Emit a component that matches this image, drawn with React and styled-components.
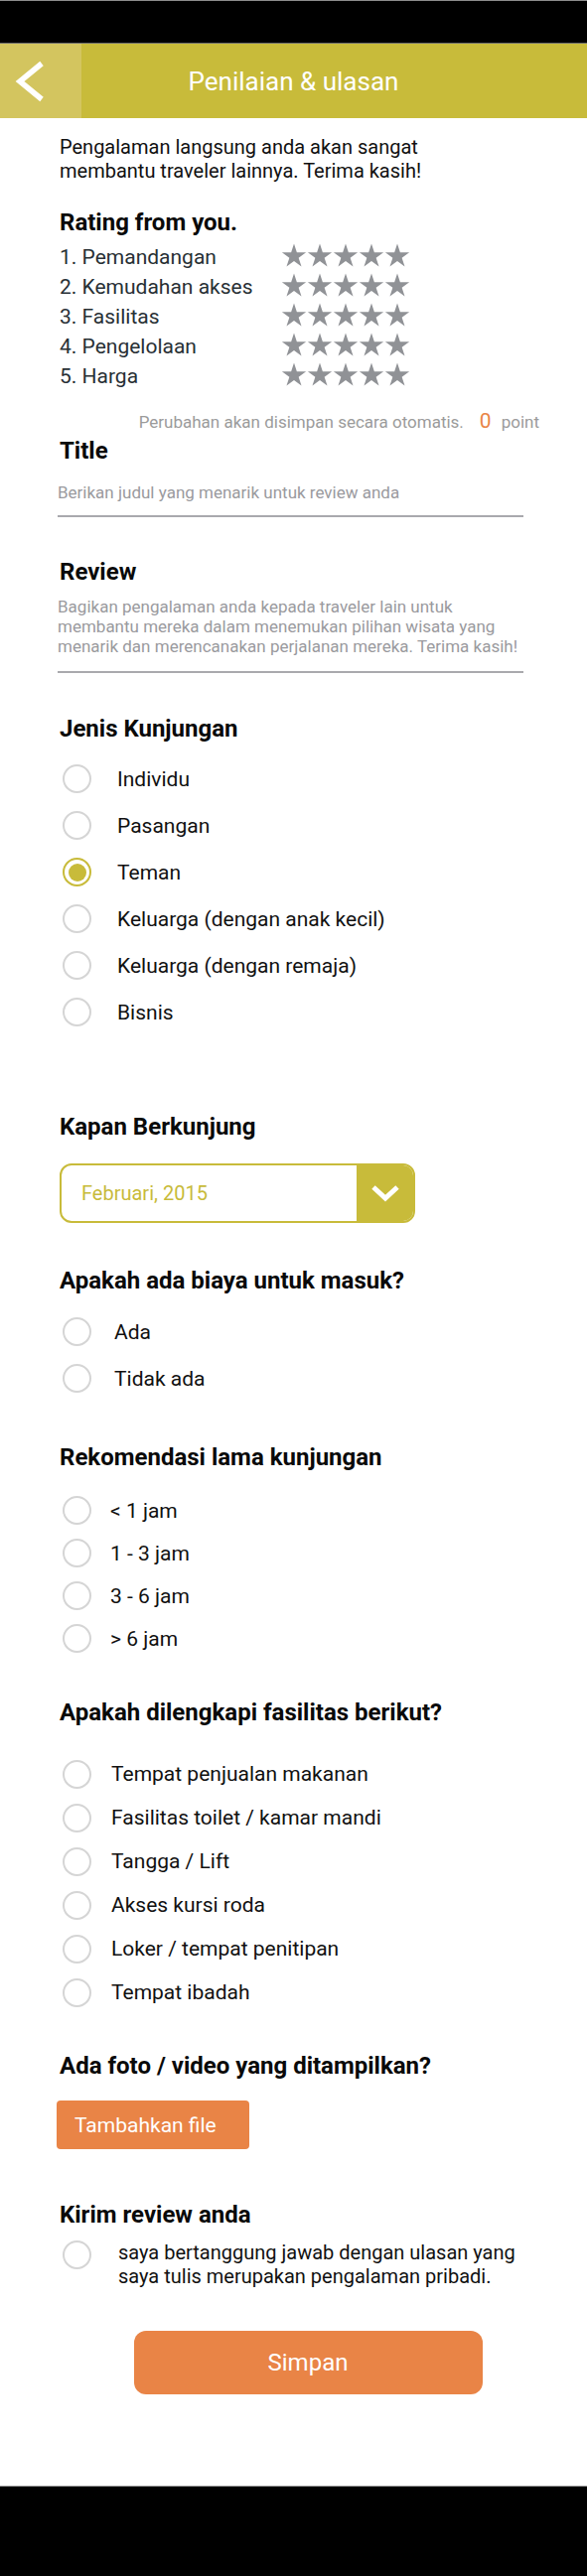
import React from 'react';
import styled, { createGlobalStyle } from 'styled-components';

const ratings = ['1. Pemandangan', '2. Kemudahan akses', '3. Fasilitas', '4. Pengelolaan', '5. Harga'];

const visitTypes = [
  'Individu',
  'Pasangan',
  'Teman',
  'Keluarga (dengan anak kecil)',
  'Keluarga (dengan remaja)',
  'Bisnis',
];

const durations = ['< 1 jam', '1 - 3 jam', '3 - 6 jam', '> 6 jam'];

const facilities = [
  'Tempat penjualan makanan',
  'Fasilitas toilet / kamar mandi',
  'Tangga / Lift',
  'Akses kursi roda',
  'Loker / tempat penitipan',
  'Tempat ibadah',
];

function Star() {
  return (
    <StarIcon viewBox="0 0 24 24">
      <polygon points="12,1.35 14.65,9.49 23.2,9.49 16.28,14.52 18.92,22.66 12,17.63 5.08,22.66 7.72,14.52 0.8,9.49 9.35,9.49" />
    </StarIcon>
  );
}

function RadioList({ items, checked, rowHeight, gap, top }) {
  return (
    <List $top={top}>
      {items.map((item) => (
        <RadioRow key={item} $h={rowHeight}>
          <Radio $checked={item === checked} />
          <RadioLabel $gap={gap}>{item}</RadioLabel>
        </RadioRow>
      ))}
    </List>
  );
}

function App() {
  return (
    <Page>
      <GlobalStyle />
      <StatusBar />
      <Header>
        <BackButton aria-label="Kembali">
          <svg width="30" height="42" viewBox="0 0 30 42">
            <polyline points="27,3 5,21 27,39" fill="none" stroke="#fff" strokeWidth="5.5" />
          </svg>
        </BackButton>
        <HeaderTitle>Penilaian &amp; ulasan</HeaderTitle>
      </Header>

      <Content>
        <Intro>
          Pengalaman langsung anda akan sangat
          <br />
          membantu traveler lainnya. Terima kasih!
        </Intro>

        <Heading $top={26}>Rating from you.</Heading>
        <RatingList>
          {ratings.map((label) => (
            <RatingRow key={label}>
              <RatingLabel>{label}</RatingLabel>
              <Stars>
                {[0, 1, 2, 3, 4].map((i) => (
                  <Star key={i} />
                ))}
              </Stars>
            </RatingRow>
          ))}
        </RatingList>
        <AutoSave>
          Perubahan akan disimpan secara otomatis.
          <Points>0</Points>
          point
        </AutoSave>

        <Heading $top={5}>Title</Heading>
        <Field $top={17} $pad={12}>
          <Placeholder $lh={22}>Berikan judul yang menarik untuk review anda</Placeholder>
        </Field>

        <Heading $top={41}>Review</Heading>
        <Field $top={11} $pad={15}>
          <Placeholder $lh={20}>
            Bagikan pengalaman anda kepada traveler lain untuk
            <br />
            membantu mereka dalam menemukan pilihan wisata yang
            <br />
            menarik dan merencanakan perjalanan mereka. Terima kasih!
          </Placeholder>
        </Field>

        <Heading $top={42}>Jenis Kunjungan</Heading>
        <RadioList items={visitTypes} checked="Teman" rowHeight={47} gap={26} top={13} />

        <Heading $top={78}>Kapan Berkunjung</Heading>
        <Select>
          <SelectValue>Februari, 2015</SelectValue>
          <SelectButton>
            <svg width="30" height="18" viewBox="0 0 30 18">
              <polyline points="3,3 15,14 27,3" fill="none" stroke="#fff" strokeWidth="5" />
            </svg>
          </SelectButton>
        </Select>

        <Heading $top={44}>Apakah ada biaya untuk masuk?</Heading>
        <RadioList items={['Ada', 'Tidak ada']} rowHeight={47} gap={23} top={14} />

        <Heading $top={42}>Rekomendasi lama kunjungan</Heading>
        <RadioList items={durations} rowHeight={43} gap={19} top={18} />

        <Heading $top={39}>Apakah dilengkapi fasilitas berikut?</Heading>
        <RadioList items={facilities} rowHeight={44} gap={20} top={26} />

        <Heading $top={38}>Ada foto / video yang ditampilkan?</Heading>
        <FileButton>Tambahkan file</FileButton>

        <Heading $top={52}>Kirim review anda</Heading>
        <Consent>
          <Radio />
          <ConsentText>
            saya bertanggung jawab dengan ulasan yang
            <br />
            saya tulis merupakan pengalaman pribadi.
          </ConsentText>
        </Consent>

        <SaveButton>Simpan</SaveButton>
      </Content>

      <NavBar />
    </Page>
  );
}

const GlobalStyle = createGlobalStyle`
  body {
    margin: 0;
    background: #fff;
    font-family: Roboto, "Noto Sans", Arial, sans-serif;
    color: #111;
  }
`;

const Page = styled.div`
  width: 591px;
  display: flex;
  flex-direction: column;
`;

const StatusBar = styled.div`
  height: 42px;
  background: #000;
  border-top: 1px solid #8c8c8c;
  border-bottom: 1px solid #6e6e6e;
`;

const NavBar = styled(StatusBar)`
  height: 90px;
`;

const Header = styled.header`
  display: grid;
  grid-template-columns: 82px 1fr 82px;
  height: 75px;
  background: #c8bb3a;
`;

const BackButton = styled.button`
  display: flex;
  align-items: center;
  padding: 0 0 0 15px;
  border: 0;
  background: #d3c55f;
  cursor: pointer;
`;

const HeaderTitle = styled.h1`
  align-self: center;
  margin: 0;
  color: #fff;
  font-size: 26px;
  font-weight: 400;
  text-align: center;
`;

const Content = styled.main`
  display: flex;
  flex-direction: column;
  align-items: flex-start;
  padding: 17px 31px 92px 60px;
`;

const Intro = styled.p`
  margin: 0;
  font-size: 20px;
  line-height: 24px;
  color: #111;
`;

const Heading = styled.h2`
  margin: ${(p) => p.$top}px 0 0;
  font-size: 24px;
  line-height: 28px;
  font-weight: 700;
  color: #0a0a0a;
`;

const RatingList = styled.div`
  margin-top: 6px;
  display: flex;
  flex-direction: column;
`;

const RatingRow = styled.div`
  display: grid;
  grid-template-columns: 223px auto;
  align-items: start;
  height: 30px;
`;

const RatingLabel = styled.span`
  font-size: 21px;
  line-height: 30px;
  color: #283035;
`;

const Stars = styled.div`
  display: flex;
`;

const StarIcon = styled.svg`
  width: 26px;
  height: 26px;
  fill: #909296;
`;

const AutoSave = styled.div`
  align-self: stretch;
  margin-top: 20px;
  padding-right: 17px;
  display: flex;
  justify-content: flex-end;
  align-items: baseline;
  font-size: 17px;
  line-height: 20px;
  color: #9b9b9b;
`;

const Points = styled.span`
  margin: 0 10px 0 16px;
  font-size: 21px;
  color: #e98446;
`;

const Field = styled.div`
  width: 469px;
  margin-top: ${(p) => p.$top}px;
  margin-left: -2px;
  padding-bottom: ${(p) => p.$pad}px;
  border-bottom: 2px solid #a9a9ad;
`;

const Placeholder = styled.div`
  font-size: 17px;
  line-height: ${(p) => p.$lh}px;
  color: #9a9a9e;
`;

const List = styled.div`
  margin-top: ${(p) => p.$top}px;
  display: flex;
  flex-direction: column;
`;

const RadioRow = styled.div`
  display: flex;
  align-items: center;
  height: ${(p) => p.$h}px;
`;

const Radio = styled.span`
  position: relative;
  flex: none;
  box-sizing: border-box;
  width: 29px;
  height: 29px;
  margin-left: 3px;
  border-radius: 50%;
  border: ${(p) => (p.$checked ? '2.5px solid #c8bb3a' : '2px solid #d5d5d5')};

  &::after {
    content: '';
    display: ${(p) => (p.$checked ? 'block' : 'none')};
    position: absolute;
    inset: 3.5px;
    border-radius: 50%;
    background: #c8bb3a;
  }
`;

const RadioLabel = styled.span`
  margin-left: ${(p) => p.$gap}px;
  font-size: 21px;
  line-height: 24px;
  color: #111;
`;

const Select = styled.div`
  box-sizing: border-box;
  display: flex;
  width: 358px;
  height: 60px;
  margin-top: 23px;
  border: 2px solid #c8bb3a;
  border-radius: 12px;
  overflow: hidden;
`;

const SelectValue = styled.span`
  flex: 1;
  align-self: center;
  padding-left: 20px;
  font-size: 20px;
  color: #c8bb3a;
`;

const SelectButton = styled.span`
  display: flex;
  align-items: center;
  justify-content: center;
  width: 57px;
  background: #c8bb3a;
`;

const FileButton = styled.button`
  width: 194px;
  height: 49px;
  margin: 21px 0 0 -3px;
  padding: 0 0 0 18px;
  border: 0;
  border-radius: 4px;
  background: #e98446;
  color: #fff;
  font-family: inherit;
  font-size: 21px;
  text-align: left;
  cursor: pointer;
`;

const Consent = styled.div`
  display: flex;
  align-items: flex-start;
  margin-top: 12px;
`;

const ConsentText = styled.span`
  margin-left: 27px;
  font-size: 20px;
  line-height: 24px;
  color: #111;
`;

const SaveButton = styled.button`
  align-self: center;
  width: 351px;
  height: 64px;
  margin-top: 43px;
  border: 0;
  border-radius: 12px;
  background: #e98446;
  color: #fff;
  font-family: inherit;
  font-size: 24px;
  cursor: pointer;
`;

export default App;
